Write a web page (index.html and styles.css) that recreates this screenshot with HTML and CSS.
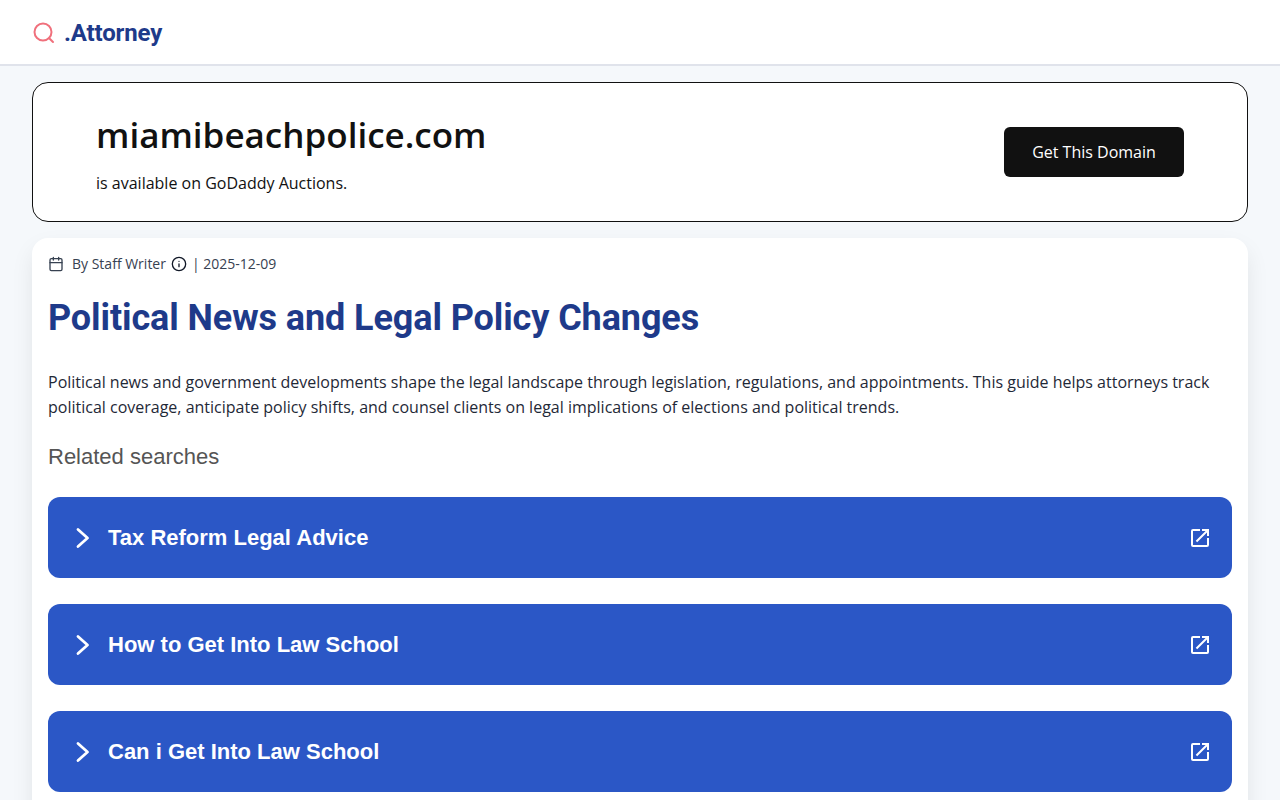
FILE: index.html
```html
<!DOCTYPE html>
<html>
<head>
  <meta charset="UTF-8">
  <title>Political News and Legal Policy Changes</title>
  <link rel="stylesheet" href="styles.css">
</head>
<body>
  <header class="site-header">
    <svg class="logo-icon" width="24" height="24" viewBox="0 0 24 24" fill="none" stroke="#f0707c" stroke-width="2" stroke-linecap="round" stroke-linejoin="round">
      <circle cx="11" cy="11" r="8.5"></circle>
      <path d="M21 21l-3.8-3.8"></path>
    </svg>
    <span class="logo-text">.Attorney</span>
  </header>

  <main class="page">
    <section class="domain-card">
      <div>
        <h2 class="domain-name">miamibeachpolice.com</h2>
        <p class="domain-note">is available on GoDaddy Auctions.</p>
      </div>
      <a class="domain-btn" href="#">Get This Domain</a>
    </section>

    <article class="content">
      <div class="meta">
        <svg width="16" height="16" viewBox="0 0 24 24" fill="none" stroke="#374151" stroke-width="2" stroke-linecap="round" stroke-linejoin="round">
          <rect x="3" y="4" width="18" height="18" rx="2"></rect>
          <path d="M16 2v4M8 2v4M3 10h18"></path>
        </svg>
        <span class="meta-author">By Staff Writer</span>
        <svg class="meta-info" width="16" height="16" viewBox="0 0 24 24" fill="none" stroke="#111827" stroke-width="2" stroke-linecap="round" stroke-linejoin="round">
          <circle cx="12" cy="12" r="10"></circle>
          <path d="M12 16v-4M12 8h.01"></path>
        </svg>
        <span class="meta-date">| 2025-12-09</span>
      </div>

      <h1 class="title">Political News and Legal Policy Changes</h1>

      <p class="intro">Political news and government developments shape the legal landscape through legislation, regulations, and appointments. This guide helps attorneys track political coverage, anticipate policy shifts, and counsel clients on legal implications of elections and political trends.</p>

      <h3 class="related">Related searches</h3>

      <div class="links">
        <a class="link-row" href="#">
          <svg width="24" height="24" viewBox="0 0 24 24" fill="none" stroke="#fff" stroke-width="2.8" stroke-linecap="round" stroke-linejoin="round"><path d="M6 3.500l9.500 8.500L6 20.500"></path></svg>
          <span class="link-text">Tax Reform Legal Advice</span>
          <svg width="24" height="24" viewBox="0 0 24 24" fill="#fff"><path d="M19 19H5V5h7V3H5a2 2 0 0 0-2 2v14a2 2 0 0 0 2 2h14a2 2 0 0 0 2-2v-7h-2v7zM14 3v2h3.590l-9.830 9.830 1.410 1.410L19 6.410V10h2V3h-7z"></path></svg>
        </a>
        <a class="link-row" href="#">
          <svg width="24" height="24" viewBox="0 0 24 24" fill="none" stroke="#fff" stroke-width="2.8" stroke-linecap="round" stroke-linejoin="round"><path d="M6 3.500l9.500 8.500L6 20.500"></path></svg>
          <span class="link-text">How to Get Into Law School</span>
          <svg width="24" height="24" viewBox="0 0 24 24" fill="#fff"><path d="M19 19H5V5h7V3H5a2 2 0 0 0-2 2v14a2 2 0 0 0 2 2h14a2 2 0 0 0 2-2v-7h-2v7zM14 3v2h3.590l-9.830 9.830 1.410 1.410L19 6.410V10h2V3h-7z"></path></svg>
        </a>
        <a class="link-row" href="#">
          <svg width="24" height="24" viewBox="0 0 24 24" fill="none" stroke="#fff" stroke-width="2.8" stroke-linecap="round" stroke-linejoin="round"><path d="M6 3.500l9.500 8.500L6 20.500"></path></svg>
          <span class="link-text">Can i Get Into Law School</span>
          <svg width="24" height="24" viewBox="0 0 24 24" fill="#fff"><path d="M19 19H5V5h7V3H5a2 2 0 0 0-2 2v14a2 2 0 0 0 2 2h14a2 2 0 0 0 2-2v-7h-2v7zM14 3v2h3.590l-9.830 9.830 1.410 1.410L19 6.410V10h2V3h-7z"></path></svg>
        </a>
      </div>
    </article>
  </main>
</body>
</html>
```

FILE: styles.css
```css
/* Reset & basic styling */
* { box-sizing: border-box; }
html, body { height: 100%; overflow: hidden; }
body {
  margin: 0;
  background: #f5f8fb;
  font-family: "Open Sans", sans-serif;
  color: #111;
}

/* Top bar */
.site-header {
  height: 66px;
  background: #fff;
  border-bottom: 2px solid #e0e3eb;
  padding: 2px 32px 0;
  display: flex;
  align-items: center;
  gap: 8px;
}
.logo-text {
  font-family: Roboto, sans-serif;
  font-weight: 700;
  font-size: 24px;
  letter-spacing: -0.15px;
  color: #1e3a8a;
}

.page {
  padding: 16px 32px 0;
  display: flex;
  flex-direction: column;
  gap: 16px;
}

/* Domain card */
.domain-card {
  height: 140px;
  background: #fff;
  border: 1px solid #111;
  border-radius: 16px;
  padding: 0 63px;
  display: flex;
  justify-content: space-between;
  align-items: center;
}
.domain-name {
  margin: 0 0 11px;
  font-size: 35px;
  font-weight: 600;
  line-height: 50px;
  color: #111;
}
.domain-note {
  margin: 0;
  font-size: 16px;
  line-height: 24px;
}
.domain-btn {
  width: 180px;
  height: 50px;
  background: #111;
  color: #fff;
  border-radius: 6px;
  font-size: 16px;
  display: flex;
  align-items: center;
  justify-content: center;
  text-decoration: none;
}

/* Article */
.content {
  background: #fff;
  border-radius: 16px;
  padding: 16px 16px 40px;
  box-shadow: 0 10px 25px -3px rgba(0,0,0,0.1);
}
.meta {
  display: flex;
  align-items: center;
  height: 20px;
  font-size: 14px;
  line-height: 19px;
  color: #374151;
}
.meta-author { margin: 0 5px 1px 8px; }
.meta-date { margin-bottom: 1px; }
.meta-info { margin-right: 5px; }
.title {
  margin: 24px 0 0;
  font-family: Roboto, sans-serif;
  font-size: 36px;
  font-weight: 700;
  line-height: 40px;
  letter-spacing: -0.1px;
  color: #1e3a8a;
}
.intro {
  margin: 32px 0 0;
  font-size: 16px;
  line-height: 25px;
  color: #1f2937;
}
.related {
  margin: 23px 0 0;
  font-family: "Liberation Sans", sans-serif;
  font-size: 22px;
  font-weight: 400;
  line-height: 28px;
  color: #555;
}

/* Related search rows */
.links {
  margin-top: 26px;
  display: flex;
  flex-direction: column;
  gap: 26px;
}
.link-row {
  height: 81px;
  background: #2b57c6;
  border-radius: 12px;
  padding: 0 20px 0 24px;
  display: flex;
  align-items: center;
  text-decoration: none;
  color: #fff;
}
.link-text {
  flex: 1;
  margin-left: 12px;
  font-family: "Liberation Sans", sans-serif;
  font-size: 22px;
  font-weight: 700;
}
```
